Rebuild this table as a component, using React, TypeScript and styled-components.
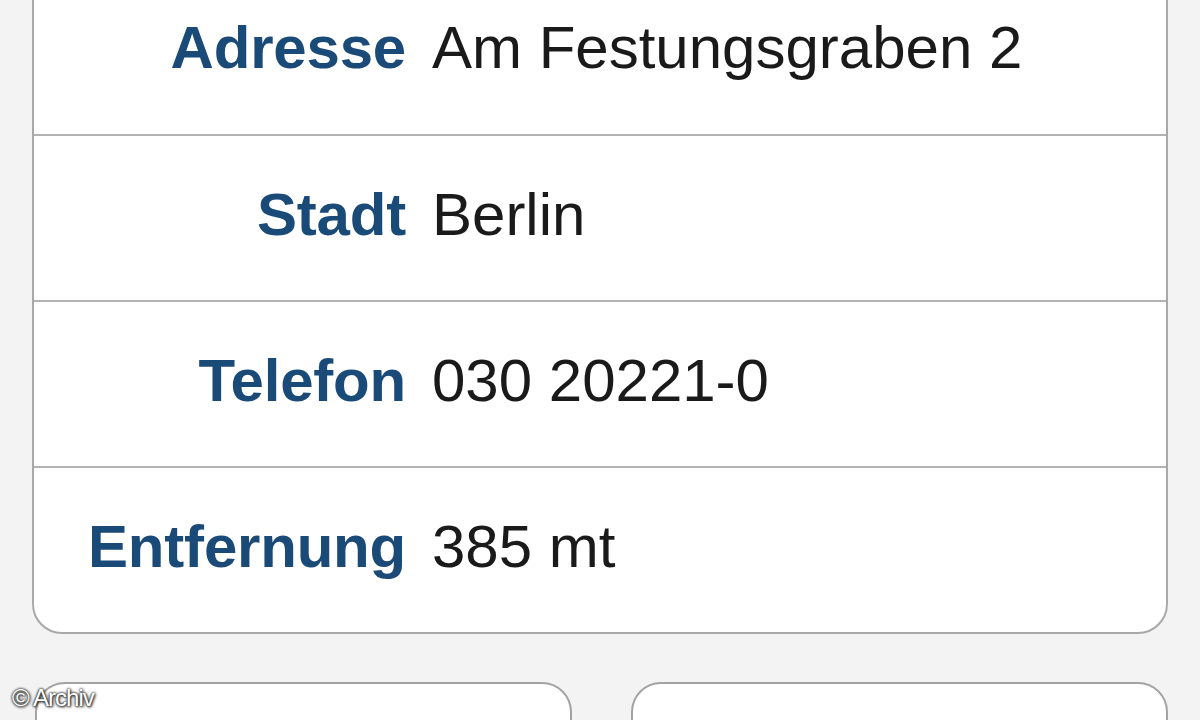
import React from "react";
import styled, { createGlobalStyle } from "styled-components";

const Global = createGlobalStyle`
  html, body { margin: 0; padding: 0; }
  body {
    background: #f3f3f3;
    font-family: "Liberation Sans", Arial, Helvetica, sans-serif;
    overflow: hidden;
  }
`;

const Page = styled.div`
  width: 1200px;
  height: 720px;
  overflow: hidden;
  position: relative;
  background: #f3f3f3;
`;

const Card = styled.div`
  margin: -34px 32px 0 32px;
  background: #ffffff;
  border: 2px solid #a9a9a9;
  border-radius: 30px;
  display: flex;
  flex-direction: column;
`;

const Row = styled.div`
  display: grid;
  grid-template-columns: 372px 1fr;
  column-gap: 26px;
  align-items: center;
  height: 164px;
  border-top: 2px solid #b2b2b2;
  &:first-child { border-top: none; height: 166px; }
`;

const Label = styled.div`
  text-align: right;
  font-weight: 700;
  font-size: 60px;
  color: #1a4a77;
  letter-spacing: -0.2px;
  line-height: 1;
  padding-bottom: 6px;
`;

const Value = styled.div`
  font-size: 60px;
  color: #1a1a1a;
  line-height: 1;
  padding-bottom: 6px;
`;

const Buttons = styled.div`
  display: grid;
  grid-template-columns: 537px 537px;
  column-gap: 59px;
  padding: 0 32px 0 35px;
  margin-top: 48px;
`;

const Button = styled.div`
  height: 80px;
  background: #ffffff;
  border: 2px solid #a3a3a3;
  border-radius: 30px;
`;

const Watermark = styled.div`
  position: absolute;
  left: 12px;
  bottom: 8px;
  font-size: 24px;
  color: #ffffff;
  letter-spacing: -1px;
  text-shadow: 0 0 2px #222, 0 0 3px #333, 1px 1px 3px #222;
`;

const rows = [
  { label: "Adresse", value: "Am Festungsgraben 2" },
  { label: "Stadt", value: "Berlin" },
  { label: "Telefon", value: "030 20221-0" },
  { label: "Entfernung", value: "385 mt" },
];

export default function App() {
  return (
    <>
      <Global />
      <Page>
        <Card>
          {rows.map((r) => (
            <Row key={r.label}>
              <Label>{r.label}</Label>
              <Value>{r.value}</Value>
            </Row>
          ))}
        </Card>
        <Buttons>
          <Button />
          <Button />
        </Buttons>
        <Watermark>© Archiv</Watermark>
      </Page>
    </>
  );
}
